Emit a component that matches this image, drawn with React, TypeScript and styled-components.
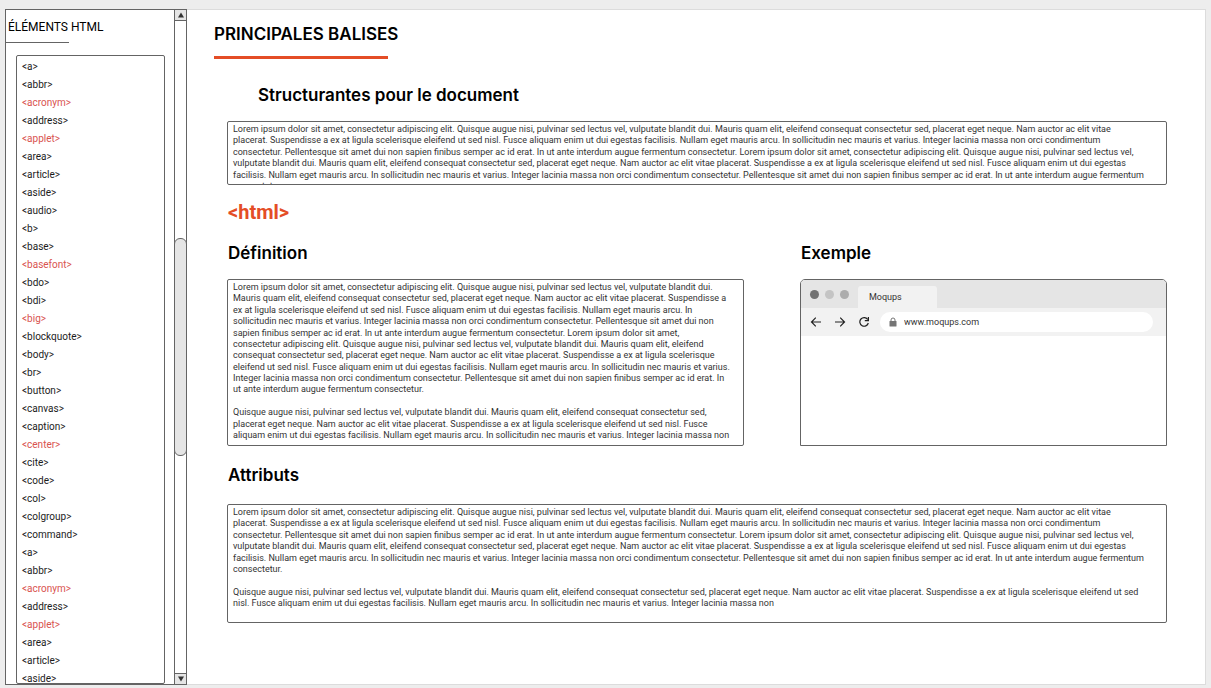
import React from 'react';
import styled, { createGlobalStyle } from 'styled-components';

const ink = '#646464';
const accent = '#e44d26';

const GlobalStyle = createGlobalStyle`
  *, *::before, *::after { box-sizing: border-box; }
  body {
    margin: 0;
    background: #ededed;
    color: #000;
    font-family: Roboto, "Liberation Sans", sans-serif;
  }
  h1, h2, h3, p, ul { margin: 0; padding: 0; }
  button, input { font: inherit; color: inherit; border: 0; padding: 0; background: none; }
`;

const Desktop = styled.div`
  display: flex;
  height: 100vh;
  min-height: 640px;
  padding: 9px 5px 3px;
`;

const Sheet = styled.div`
  display: flex;
  flex: 1;
  min-width: 0;
  background: #fff;
  border: 1px solid #dcdcdc;
  border-left: 0;
`;

const Sidebar = styled.aside`
  display: flex;
  flex: none;
  width: 182px;
  margin: -1px 0;
  border: 1px solid ${ink};
`;

const SidebarContent = styled.div`
  display: flex;
  flex-direction: column;
  flex: 1;
  min-width: 0;
`;

const SidebarTitle = styled.h2`
  padding: 7px 2px 0;
  font-size: 12px;
  font-weight: 400;
  line-height: 20px;
`;

const SidebarRule = styled.div`
  width: 63px;
  height: 1px;
  margin-top: 5px;
  background: ${ink};
`;

const TagList = styled.ul`
  flex: 1;
  min-height: 0;
  margin: 12px 9px 0 10px;
  padding: 2px 5px 0;
  overflow: hidden;
  list-style: none;
  border: 1px solid ${ink};
  border-radius: 2px;
`;

const TagLink = styled.a<{ $deprecated: boolean }>`
  display: block;
  font-size: 10px;
  line-height: 18px;
  text-decoration: none;
  color: ${p => (p.$deprecated ? '#d9534f' : '#1c1c1c')};
`;

const ScrollBar = styled.div`
  display: flex;
  flex-direction: column;
  flex: none;
  width: 12px;
  border-left: 1px solid ${ink};
`;

const ScrollButton = styled.button<{ $end?: boolean }>`
  display: flex;
  align-items: center;
  justify-content: center;
  flex: none;
  height: 11px;
  background: #e5e5e5;
  border: 0 solid ${ink};
  border-width: ${p => (p.$end ? '1px 0 0' : '0 0 1px')};
`;

const Track = styled.div`
  display: grid;
  grid-template-rows: 1fr 1fr 1fr;
  flex: 1;
`;

const Thumb = styled.div`
  grid-row: 2;
  margin: 0 -1px;
  background: #e5e5e5;
  border: 1px solid ${ink};
  border-radius: 6px;
`;

const Main = styled.main`
  flex: 1;
  min-width: 0;
  padding: 14px 38px 14px 27px;
  overflow: hidden;
`;

const Heading = styled.h3`
  font-family: Inter, "Liberation Sans", sans-serif;
  font-size: 17px;
  font-weight: 600;
  line-height: 20px;
`;

const TitleRule = styled.div`
  width: 174px;
  height: 3px;
  margin: 12px 0 26px;
  background: ${accent};
`;

const Subtitle = styled(Heading)`
  padding-left: 44px;
`;

const SectionHeading = styled(Heading)`
  padding-left: 1px;
`;

const Article = styled.div`
  padding-left: 13px;
`;

const TagName = styled.h2`
  margin: 15px 0 19px;
  padding-left: 1px;
  font-size: 20px;
  font-weight: 700;
  line-height: 24px;
  color: ${accent};
`;

const Columns = styled.div`
  display: grid;
  grid-template-columns: 517fr 367fr;
  column-gap: 56px;
  margin-bottom: 19px;
`;

const Panel = styled.div<{ $height: number; $gap: number }>`
  height: ${p => p.$height}px;
  margin-top: ${p => p.$gap}px;
  padding: 2px 5px;
  overflow: hidden;
  border: 1px solid ${ink};
  border-radius: 2px;
`;

const Copy = styled.p<{ $height: number }>`
  display: grid;
  align-content: space-between;
  min-height: ${p => p.$height}px;
  font-size: 9px;
  line-height: 11px;
  color: #333;
`;

const Line = styled.span`
  display: block;
  min-height: 11px;
`;

const Browser = styled.div`
  height: 167px;
  margin-top: 16px;
  overflow: hidden;
  border: 1px solid ${ink};
  border-radius: 5px 5px 0 0;
  font-size: 9px;
  color: #333;
`;

const TabStrip = styled.div`
  display: flex;
  align-items: flex-end;
  height: 28px;
  padding-left: 9px;
  background: #e5e5e5;
`;

const Dots = styled.div`
  display: flex;
  gap: 6px;
  margin: 0 9px 9px 0;
`;

const Dot = styled.span<{ $color: string }>`
  width: 9px;
  height: 9px;
  border-radius: 50%;
  background: ${p => p.$color};
`;

const Tab = styled.button`
  width: 79px;
  height: 22px;
  padding: 0 11px;
  text-align: left;
  background: #f2f2f2;
  border-radius: 3px 3px 0 0;
`;

const Toolbar = styled.div`
  display: flex;
  align-items: center;
  gap: 12px;
  height: 28px;
  padding: 0 13px 0 9px;
  background: #f2f2f2;
`;

const ToolButton = styled.button`
  display: flex;
  width: 12px;
  height: 12px;
`;

const Address = styled.label`
  display: flex;
  align-items: center;
  flex: 1;
  gap: 7px;
  height: 20px;
  margin-left: -2px;
  padding: 0 9px;
  background: #fff;
  border-radius: 10px;
`;

const AddressInput = styled.input`
  flex: 1;
  min-width: 0;
  outline: 0;
`;

const tagNames = [
  'a', 'abbr', 'acronym', 'address', 'applet', 'area', 'article', 'aside', 'audio', 'b',
  'base', 'basefont', 'bdo', 'bdi', 'big', 'blockquote', 'body', 'br', 'button', 'canvas',
  'caption', 'center', 'cite', 'code', 'col', 'colgroup', 'command',
  'a', 'abbr', 'acronym', 'address', 'applet', 'area', 'article', 'aside',
];
const deprecated = ['acronym', 'applet', 'basefont', 'big', 'center'];

const intro = [
  'Lorem ipsum dolor sit amet, consectetur adipiscing elit. Quisque augue nisi, pulvinar sed lectus vel, vulputate blandit dui. Mauris quam elit, eleifend consequat consectetur sed, placerat eget neque. Nam auctor ac elit vitae',
  'placerat. Suspendisse a ex at ligula scelerisque eleifend ut sed nisl. Fusce aliquam enim ut dui egestas facilisis. Nullam eget mauris arcu. In sollicitudin nec mauris et varius. Integer lacinia massa non orci condimentum',
  'consectetur. Pellentesque sit amet dui non sapien finibus semper ac id erat. In ut ante interdum augue fermentum consectetur. Lorem ipsum dolor sit amet, consectetur adipiscing elit. Quisque augue nisi, pulvinar sed lectus vel,',
  'vulputate blandit dui. Mauris quam elit, eleifend consequat consectetur sed, placerat eget neque. Nam auctor ac elit vitae placerat. Suspendisse a ex at ligula scelerisque eleifend ut sed nisl. Fusce aliquam enim ut dui egestas',
  'facilisis. Nullam eget mauris arcu. In sollicitudin nec mauris et varius. Integer lacinia massa non orci condimentum consectetur. Pellentesque sit amet dui non sapien finibus semper ac id erat. In ut ante interdum augue fermentum',
  'consectetur.',
];

const definition = [
  'Lorem ipsum dolor sit amet, consectetur adipiscing elit. Quisque augue nisi, pulvinar sed lectus vel, vulputate blandit dui.',
  'Mauris quam elit, eleifend consequat consectetur sed, placerat eget neque. Nam auctor ac elit vitae placerat. Suspendisse a',
  'ex at ligula scelerisque eleifend ut sed nisl. Fusce aliquam enim ut dui egestas facilisis. Nullam eget mauris arcu. In',
  'sollicitudin nec mauris et varius. Integer lacinia massa non orci condimentum consectetur. Pellentesque sit amet dui non',
  'sapien finibus semper ac id erat. In ut ante interdum augue fermentum consectetur. Lorem ipsum dolor sit amet,',
  'consectetur adipiscing elit. Quisque augue nisi, pulvinar sed lectus vel, vulputate blandit dui. Mauris quam elit, eleifend',
  'consequat consectetur sed, placerat eget neque. Nam auctor ac elit vitae placerat. Suspendisse a ex at ligula scelerisque',
  'eleifend ut sed nisl. Fusce aliquam enim ut dui egestas facilisis. Nullam eget mauris arcu. In sollicitudin nec mauris et varius.',
  'Integer lacinia massa non orci condimentum consectetur. Pellentesque sit amet dui non sapien finibus semper ac id erat. In',
  'ut ante interdum augue fermentum consectetur.',
  '',
  'Quisque augue nisi, pulvinar sed lectus vel, vulputate blandit dui. Mauris quam elit, eleifend consequat consectetur sed,',
  'placerat eget neque. Nam auctor ac elit vitae placerat. Suspendisse a ex at ligula scelerisque eleifend ut sed nisl. Fusce',
  'aliquam enim ut dui egestas facilisis. Nullam eget mauris arcu. In sollicitudin nec mauris et varius. Integer lacinia massa non',
];

const attributes = [
  ...intro,
  '',
  'Quisque augue nisi, pulvinar sed lectus vel, vulputate blandit dui. Mauris quam elit, eleifend consequat consectetur sed, placerat eget neque. Nam auctor ac elit vitae placerat. Suspendisse a ex at ligula scelerisque eleifend ut sed',
  'nisl. Fusce aliquam enim ut dui egestas facilisis. Nullam eget mauris arcu. In sollicitudin nec mauris et varius. Integer lacinia massa non',
];

type TextPanelProps = { lines: string[]; height: number; copyHeight: number; gap?: number };

function TextPanel({ lines, height, copyHeight, gap = 16 }: TextPanelProps) {
  return (
    <Panel $height={height} $gap={gap}>
      <Copy $height={copyHeight}>
        {lines.map((line, i) => (
          <Line key={i}>{line}</Line>
        ))}
      </Copy>
    </Panel>
  );
}

function ToolIcon({ d }: { d: string }) {
  return (
    <svg width="12" height="12" viewBox="0 0 12 12" fill="none" stroke="#222" strokeWidth="1.2">
      <path d={d} />
    </svg>
  );
}

export default function App() {
  return (
    <>
      <GlobalStyle />
      <Desktop>
        <Sheet>
          <Sidebar>
            <SidebarContent>
              <SidebarTitle>ÉLÉMENTS HTML</SidebarTitle>
              <SidebarRule />
              <TagList>
                {tagNames.map((name, i) => (
                  <li key={i}>
                    <TagLink href={`#${name}`} $deprecated={deprecated.includes(name)}>{`<${name}>`}</TagLink>
                  </li>
                ))}
              </TagList>
            </SidebarContent>
            <ScrollBar>
              <ScrollButton aria-label="Défiler vers le haut">
                <svg width="8" height="6" viewBox="0 0 8 6"><path d="M4 0.5 7 5.5H1Z" fill="#333" /></svg>
              </ScrollButton>
              <Track><Thumb /></Track>
              <ScrollButton $end aria-label="Défiler vers le bas">
                <svg width="8" height="6" viewBox="0 0 8 6"><path d="M4 5.5 1 0.5H7Z" fill="#333" /></svg>
              </ScrollButton>
            </ScrollBar>
          </Sidebar>
          <Main>
            <Heading as="h1">PRINCIPALES BALISES</Heading>
            <TitleRule />
            <Subtitle as="h2">Structurantes pour le document</Subtitle>
            <Article>
              <TextPanel lines={intro} height={64} copyHeight={68} />
              <TagName>{'<html>'}</TagName>
              <Columns>
                <section>
                  <SectionHeading>Définition</SectionHeading>
                  <TextPanel lines={definition} height={167} copyHeight={159} />
                </section>
                <section>
                  <SectionHeading>Exemple</SectionHeading>
                  <Browser>
                    <TabStrip>
                      <Dots>
                        <Dot $color="#737373" />
                        <Dot $color="#c4c4c4" />
                        <Dot $color="#adadad" />
                      </Dots>
                      <Tab>Moqups</Tab>
                    </TabStrip>
                    <Toolbar>
                      <ToolButton aria-label="Page précédente"><ToolIcon d="M11 6H1.5M5.8 1.7 1.5 6l4.3 4.3" /></ToolButton>
                      <ToolButton aria-label="Page suivante"><ToolIcon d="M1 6h9.5M6.2 1.7 10.5 6 6.2 10.3" /></ToolButton>
                      <ToolButton aria-label="Actualiser"><ToolIcon d="M9.7 3.5A4.3 4.3 0 1 0 10.3 7M10.4 1V4.6H6.8" /></ToolButton>
                      <Address>
                        <svg width="8" height="10" viewBox="0 0 8 10">
                          <path d="M2 4.5V3a2 2 0 0 1 4 0v1.5" fill="none" stroke="#757575" />
                          <rect x="0.5" y="4" width="7" height="5.5" rx="0.5" fill="#757575" />
                        </svg>
                        <AddressInput aria-label="Adresse" defaultValue="www.moqups.com" />
                      </Address>
                    </Toolbar>
                  </Browser>
                </section>
              </Columns>
              <SectionHeading>Attributs</SectionHeading>
              <TextPanel lines={attributes} height={119} copyHeight={102} gap={19} />
            </Article>
          </Main>
        </Sheet>
      </Desktop>
    </>
  );
}
